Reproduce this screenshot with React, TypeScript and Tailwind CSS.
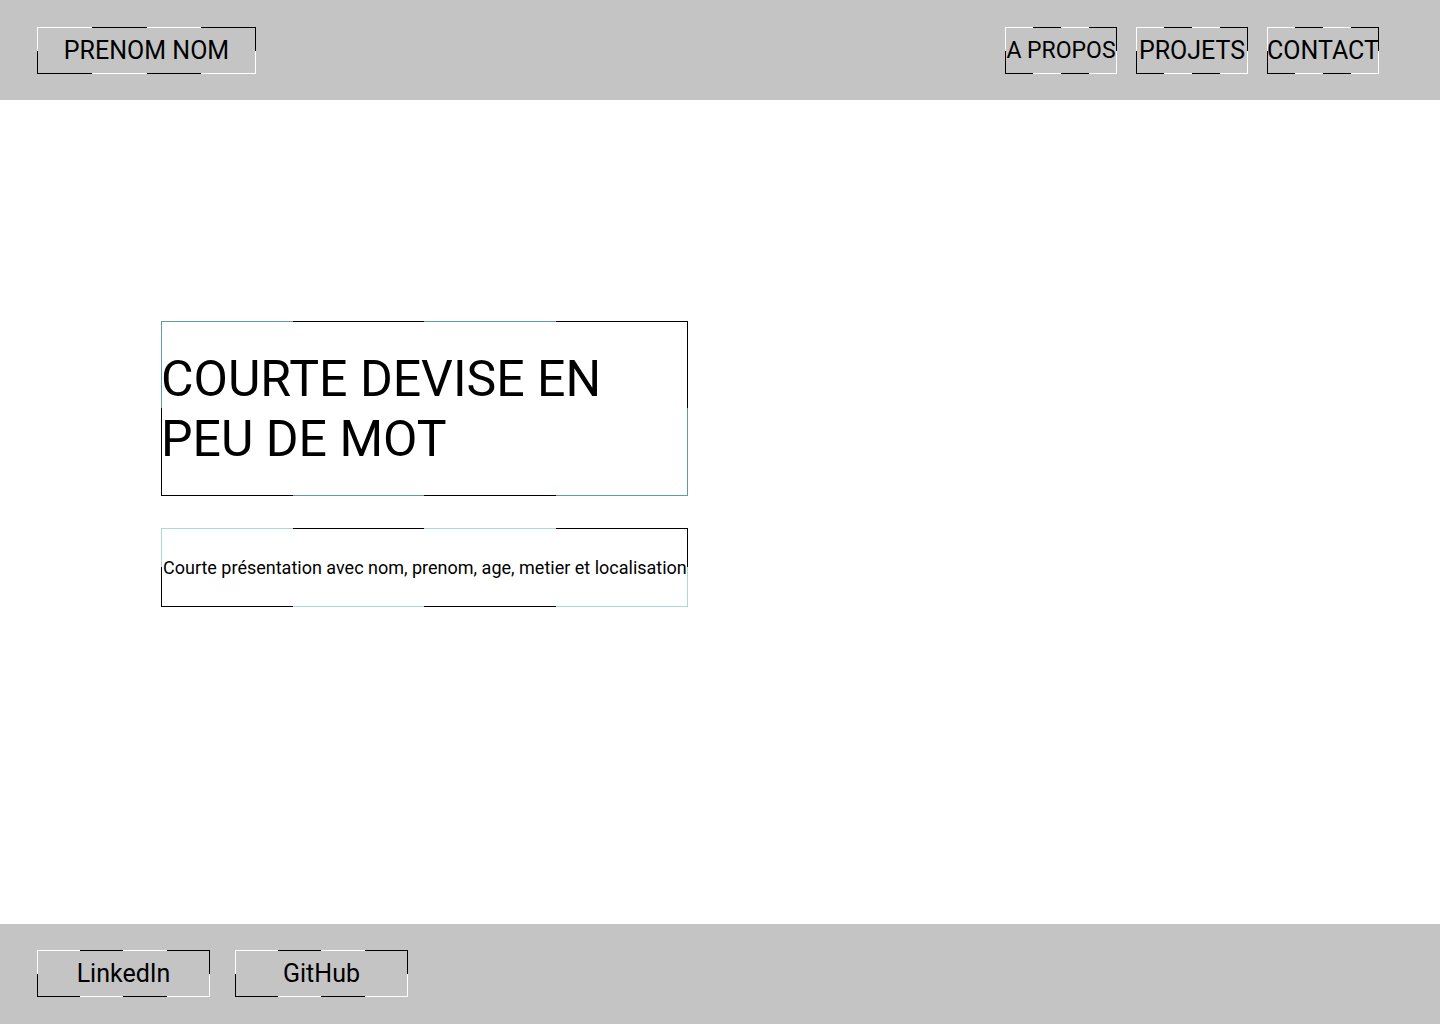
import type { ReactNode } from "react";

type FrameProps = {
  className?: string;
  children: ReactNode;
};

// wireframe box: each side split in alternating light / black segments
function Frame({ className = "", children }: FrameProps) {
  return (
    <div className={`relative ${className}`}>
      <span className="pointer-events-none absolute left-0 top-0 h-px w-full bg-[linear-gradient(to_right,var(--l)_25%,#000_25%,#000_50%,var(--l)_50%,var(--l)_75%,#000_75%)]" />
      <span className="pointer-events-none absolute bottom-0 left-0 h-px w-full bg-[linear-gradient(to_right,#000_25%,var(--l)_25%,var(--l)_50%,#000_50%,#000_75%,var(--l)_75%)]" />
      <span className="pointer-events-none absolute left-0 top-0 h-full w-px bg-[linear-gradient(to_bottom,var(--l)_50%,#000_50%)]" />
      <span className="pointer-events-none absolute right-0 top-0 h-full w-px bg-[linear-gradient(to_bottom,#000_50%,var(--l)_50%)]" />
      {children}
    </div>
  );
}

const navItems = [
  { label: "A PROPOS", size: "text-[23px]" },
  { label: "PROJETS", size: "text-[25px]" },
  { label: "CONTACT", size: "text-[25px]" },
];

export default function App() {
  return (
    <div className="flex min-h-screen w-full flex-col bg-white font-['Roboto','Liberation_Sans',sans-serif] text-black">
      <header className="flex h-[100px] items-center justify-between bg-[#c4c4c4] pl-[37px] pr-[61px]">
        <Frame className="flex h-[47px] w-[219px] items-center justify-center [--l:#ffffff]">
          <span className="text-[25px] leading-none">PRENOM NOM</span>
        </Frame>
        <nav className="flex items-center gap-[19px]">
          {navItems.map((item) => (
            <Frame
              key={item.label}
              className="flex h-[47px] w-[112px] items-center justify-center [--l:#ffffff]"
            >
              <span className={`${item.size} whitespace-nowrap leading-none`}>{item.label}</span>
            </Frame>
          ))}
        </nav>
      </header>

      <main className="flex h-[824px] flex-col gap-8 pl-[161px] pt-[221px]">
        <Frame className="flex h-[175px] w-[527px] items-center [--l:#5f9ea0]">
          <h1 className="text-[50px] font-normal leading-[60px]">
            COURTE DEVISE EN
            <br />
            PEU DE MOT
          </h1>
        </Frame>
        <Frame className="flex h-[79px] w-[527px] items-center [--l:#a8dada]">
          <p className="whitespace-nowrap pl-[2px] text-lg leading-none">
            Courte présentation avec nom, prenom, age, metier et localisation
          </p>
        </Frame>
      </main>

      <footer className="flex h-[100px] items-start gap-[25px] bg-[#c4c4c4] pl-[37px] pt-[26px]">
        {["LinkedIn", "GitHub"].map((label) => (
          <Frame
            key={label}
            className="flex h-[47px] w-[173px] items-center justify-center [--l:#ffffff]"
          >
            <span className="text-[25px] leading-none">{label}</span>
          </Frame>
        ))}
      </footer>
    </div>
  );
}
